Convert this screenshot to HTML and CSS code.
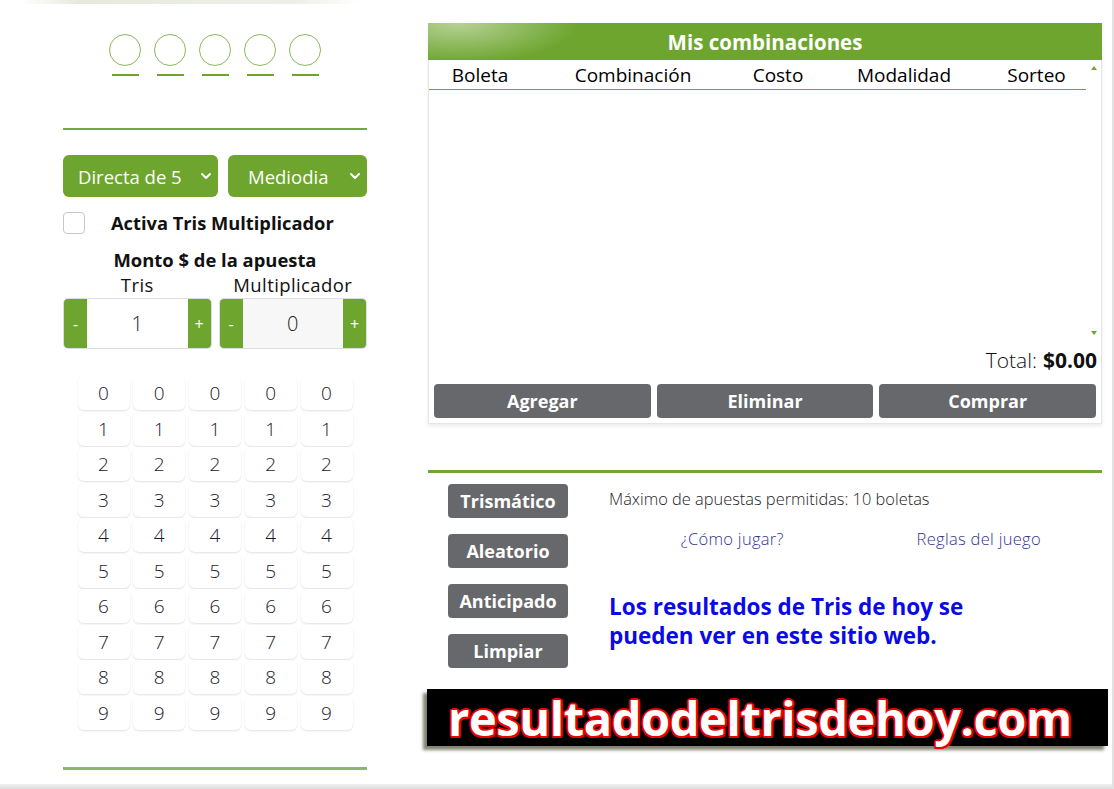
FILE: index.html
```html
<!DOCTYPE html>
<html lang="es">
<head>
<meta charset="utf-8">
<title>Tris</title>
<link rel="stylesheet" href="styles.css">
</head>
<body>
<div class="page">
  <div class="topfade"></div>
  <main class="main">
    <section class="left">
      <div class="balls">
        <div class="ball"><span class="circle"></span><span class="dash"></span></div>
        <div class="ball"><span class="circle"></span><span class="dash"></span></div>
        <div class="ball"><span class="circle"></span><span class="dash"></span></div>
        <div class="ball"><span class="circle"></span><span class="dash"></span></div>
        <div class="ball"><span class="circle"></span><span class="dash"></span></div>
      </div>
      <div class="rule rule-top"></div>
      <div class="selects">
        <div class="select sel-a"><span>Directa de 5</span><svg class="chev" width="12" height="8" viewBox="0 0 12 8"><path d="M2 2l4 4 4-4" fill="none" stroke="#fff" stroke-width="2" stroke-linecap="round" stroke-linejoin="round"/></svg></div>
        <div class="select sel-b"><span>Mediodia</span><svg class="chev" width="12" height="8" viewBox="0 0 12 8"><path d="M2 2l4 4 4-4" fill="none" stroke="#fff" stroke-width="2" stroke-linecap="round" stroke-linejoin="round"/></svg></div>
      </div>
      <div class="check"><span class="box"></span><span class="check-label">Activa Tris Multiplicador</span></div>
      <div class="monto">Monto $ de la apuesta</div>
      <div class="amounts">
        <div class="amount">
          <div class="amount-label">Tris</div>
          <div class="stepper"><span class="step">-</span><span class="val">1</span><span class="step">+</span></div>
        </div>
        <div class="amount">
          <div class="amount-label">Multiplicador</div>
          <div class="stepper"><span class="step">-</span><span class="val val-gray">0</span><span class="step">+</span></div>
        </div>
      </div>
      <div class="digits">
        <span class="d">0</span><span class="d">0</span><span class="d">0</span><span class="d">0</span><span class="d">0</span>
        <span class="d">1</span><span class="d">1</span><span class="d">1</span><span class="d">1</span><span class="d">1</span>
        <span class="d">2</span><span class="d">2</span><span class="d">2</span><span class="d">2</span><span class="d">2</span>
        <span class="d">3</span><span class="d">3</span><span class="d">3</span><span class="d">3</span><span class="d">3</span>
        <span class="d">4</span><span class="d">4</span><span class="d">4</span><span class="d">4</span><span class="d">4</span>
        <span class="d">5</span><span class="d">5</span><span class="d">5</span><span class="d">5</span><span class="d">5</span>
        <span class="d">6</span><span class="d">6</span><span class="d">6</span><span class="d">6</span><span class="d">6</span>
        <span class="d">7</span><span class="d">7</span><span class="d">7</span><span class="d">7</span><span class="d">7</span>
        <span class="d">8</span><span class="d">8</span><span class="d">8</span><span class="d">8</span><span class="d">8</span>
        <span class="d">9</span><span class="d">9</span><span class="d">9</span><span class="d">9</span><span class="d">9</span>
      </div>
      <div class="rule rule-bottom"></div>
    </section>

    <section class="right">
      <div class="card">
        <div class="card-head">Mis combinaciones</div>
        <div class="table-wrap">
          <div class="table">
            <div class="thead">
              <span>Boleta</span><span>Combinación</span><span>Costo</span><span>Modalidad</span><span>Sorteo</span>
            </div>
            <div class="tbody"></div>
          </div>
          <div class="scrollbar"><span class="arrow-up"></span><span class="arrow-down"></span></div>
        </div>
        <div class="total">Total: <b>$0.00</b></div>
        <div class="actions">
          <span class="btn">Agregar</span>
          <span class="btn">Eliminar</span>
          <span class="btn">Comprar</span>
        </div>
      </div>

      <div class="rule rule-green"></div>

      <div class="lower">
        <div class="side-btns">
          <span class="btn btn-side">Trismático</span>
          <span class="btn btn-side">Aleatorio</span>
          <span class="btn btn-side">Anticipado</span>
          <span class="btn btn-side">Limpiar</span>
        </div>
        <div class="info">
          <div class="max">Máximo de apuestas permitidas: 10 boletas</div>
          <div class="links"><a class="link">¿Cómo jugar?</a><a class="link">Reglas del juego</a></div>
          <div class="promo">Los resultados de Tris de hoy se<br>pueden ver en este sitio web.</div>
        </div>
      </div>

      <div class="banner"><span class="banner-text">resultadodeltrisdehoy.com</span></div>
    </section>
  </main>
  <div class="bottomfade"></div>
</div>
</body>
</html>
```

FILE: styles.css
```css
* { box-sizing: border-box; }
html, body { margin: 0; padding: 0; background: #fff; }
body {
  width: 1114px;
  height: 789px;
  overflow: hidden;
  font-family: "Open Sans", "Liberation Sans", sans-serif;
  color: #111;
}
.page {
  width: 1114px;
  height: 789px;
  display: flex;
  flex-direction: column;
  border-right: 2px solid #e2e2e2;
}
.topfade {
  height: 4px;
  flex: none;
  background: linear-gradient(90deg, rgba(255,255,255,0) 20px, #e6eadc 80px, #eef0e8 300px, rgba(255,255,255,0) 360px);
}
.bottomfade {
  height: 5px;
  flex: none;
  background: linear-gradient(180deg, #f2f2f2, #dcdcdc);
}
.main {
  flex: 1;
  display: flex;
  padding-left: 63px;
  gap: 61px;
}

/* ---------- left column ---------- */
.left {
  width: 304px;
  flex: none;
  display: flex;
  flex-direction: column;
}
.balls {
  display: flex;
  justify-content: center;
  gap: 13px;
  padding-top: 30px;
}
.ball {
  display: flex;
  flex-direction: column;
  align-items: center;
  gap: 8px;
}
.circle {
  width: 32px;
  height: 32px;
  border-radius: 50%;
  border: 1.5px solid #8ab858;
}
.dash {
  width: 27px;
  height: 2px;
  background: #6fa32f;
}
.rule { height: 2px; }
.rule-top { margin-top: 52px; background: #74a83f; }
.rule-bottom { margin-top: 37px; height: 3px; background: #8db66a; }

.selects {
  margin-top: 25px;
  display: flex;
  gap: 10px;
}
.select {
  height: 42px;
  border-radius: 6px;
  background: #6ea52f;
  color: #fff;
  font-size: 18.5px;
  display: flex;
  align-items: center;
  justify-content: space-between;
}
.sel-a { width: 155px; padding: 0 6px 0 15px; }
.sel-b { flex: 1; padding: 0 6px 0 20px; }

.check {
  margin-top: 15px;
  height: 22px;
  display: flex;
  align-items: center;
  gap: 26px;
}
.box {
  width: 22px;
  height: 22px;
  border: 1px solid #c8c8c8;
  border-radius: 4px;
  background: #fff;
}
.check-label { font-weight: 700; font-size: 18.3px; line-height: 22px; }

.monto {
  margin-top: 15px;
  text-align: center;
  font-weight: 700;
  font-size: 18.4px;
  line-height: 22px;
}
.amounts {
  display: flex;
  gap: 7px;
}
.amount { flex: 1; display: flex; flex-direction: column; }
.amount-label {
  margin-top: 3px;
  text-align: center;
  font-size: 18.5px;
  letter-spacing: 0.4px;
  line-height: 22px;
}
.stepper {
  margin-top: 2px;
  height: 51px;
  display: flex;
  border: 1px solid #dedede;
  border-radius: 5px;
  overflow: hidden;
}
.step {
  width: 23px;
  background: #6ea52f;
  color: #fff;
  font-size: 16px;
  display: flex;
  align-items: center;
  justify-content: center;
}
.val {
  flex: 1;
  display: flex;
  align-items: center;
  justify-content: center;
  font-size: 20px;
  font-weight: 300;
  color: #222;
  background: #fff;
}
.val-gray { background: #f7f7f7; }

.digits {
  margin-top: 27px;
  align-self: center;
  display: grid;
  grid-template-columns: repeat(5, 52px);
  grid-auto-rows: 34px;
  column-gap: 3.75px;
  row-gap: 1.56px;
}
.d {
  display: flex;
  align-items: center;
  justify-content: center;
  border-radius: 6px;
  background: #fff;
  box-shadow: 0 1px 2px rgba(0,0,0,0.12);
  font-size: 19px;
  font-weight: 300;
  color: #1a1a2a;
}

/* ---------- right column ---------- */
.right {
  width: 674px;
  flex: none;
  display: flex;
  flex-direction: column;
}
.card {
  margin-top: 19px;
  border: 1px solid #e6e6e6;
  border-top: none;
  box-shadow: 0 2px 4px rgba(0,0,0,0.08);
  display: flex;
  flex-direction: column;
  padding-bottom: 5px;
}
.card-head {
  height: 37px;
  margin: 0 -1px;
  background: radial-gradient(ellipse 120px 40px at 30px 0px, #b6d296 0%, rgba(111,166,48,0) 100%), #6ea52f;
  color: #fff;
  font-weight: 700;
  font-size: 20.5px;
  display: flex;
  align-items: center;
  justify-content: center;
}
.table-wrap {
  display: flex;
  height: 281px;
}
.table { flex: 1; display: flex; flex-direction: column; }
.thead {
  height: 30px;
  display: grid;
  grid-template-columns: 102px 204px 86px 166px 1fr;
  align-items: center;
  border-bottom: 1px solid #6ea52f;
  font-size: 19px;
  color: #000;
  text-align: center;
}
.tbody { flex: 1; }
.scrollbar {
  width: 15px;
  display: flex;
  flex-direction: column;
  justify-content: space-between;
  align-items: center;
  padding: 6px 0 6px;
}
.arrow-up {
  width: 0; height: 0;
  border-left: 3px solid transparent;
  border-right: 3px solid transparent;
  border-bottom: 4px solid #6ea52f;
}
.arrow-down {
  width: 0; height: 0;
  border-left: 3px solid transparent;
  border-right: 3px solid transparent;
  border-top: 4px solid #6ea52f;
}
.total {
  height: 38px;
  display: flex;
  align-items: center;
  justify-content: flex-end;
  gap: 6px;
  padding-right: 4px;
  font-size: 21px;
  font-weight: 300;
  color: #111;
}
.total b { font-weight: 700; }
.actions {
  display: flex;
  gap: 6px;
  padding: 5px 5px 0;
}
.btn {
  height: 34px;
  border-radius: 4px;
  background: #67686b;
  color: #fff;
  font-weight: 700;
  font-size: 18px;
  display: flex;
  align-items: center;
  justify-content: center;
}
.actions .btn { flex: 1; }

.rule-green { margin-top: 46px; height: 3px; background: #6fa73a; }

.lower {
  display: flex;
  padding-left: 20px;
  gap: 41px;
}
.side-btns {
  padding-top: 11px;
  width: 120px;
  display: flex;
  flex-direction: column;
  gap: 16px;
}
.btn-side { font-size: 18px; }
.info { flex: 1; display: flex; flex-direction: column; }
.max {
  margin-top: 16px;
  font-size: 16.4px;
  line-height: 20px;
  font-weight: 300;
  color: #222;
}
.links {
  margin-top: 20px;
  display: grid;
  grid-template-columns: 1fr 1fr;
  text-align: center;
  font-size: 16.5px;
  letter-spacing: 0.3px;
  line-height: 20px;
  font-weight: 300;
}
.link { color: #33338f; }
.promo {
  margin-top: 43px;
  font-family: "Open Sans", "Liberation Sans", sans-serif;
  font-weight: 700;
  font-size: 22.5px;
  line-height: 29px;
  color: #0a0ae6;
}
.banner {
  margin-top: 21px;
  margin-left: -1px;
  margin-right: -6px;
  height: 57px;
  background: #000;
  box-shadow: -4px 4px 3px rgba(90,90,70,0.75);
  display: flex;
  align-items: center;
  padding-left: 21px;
}
.banner-text {
  font-family: "Open Sans", "Liberation Sans", sans-serif;
  font-weight: 700;
  font-size: 47px;
  color: #fff;
  letter-spacing: -0.4px;
  text-shadow: 2px 0 0 #e00, -2px 0 0 #e00, 0 2px 0 #e00, 0 -2px 0 #e00, 1.5px 1.5px 0 #e00, -1.5px 1.5px 0 #e00, 1.5px -1.5px 0 #e00, -1.5px -1.5px 0 #e00;
}
```
